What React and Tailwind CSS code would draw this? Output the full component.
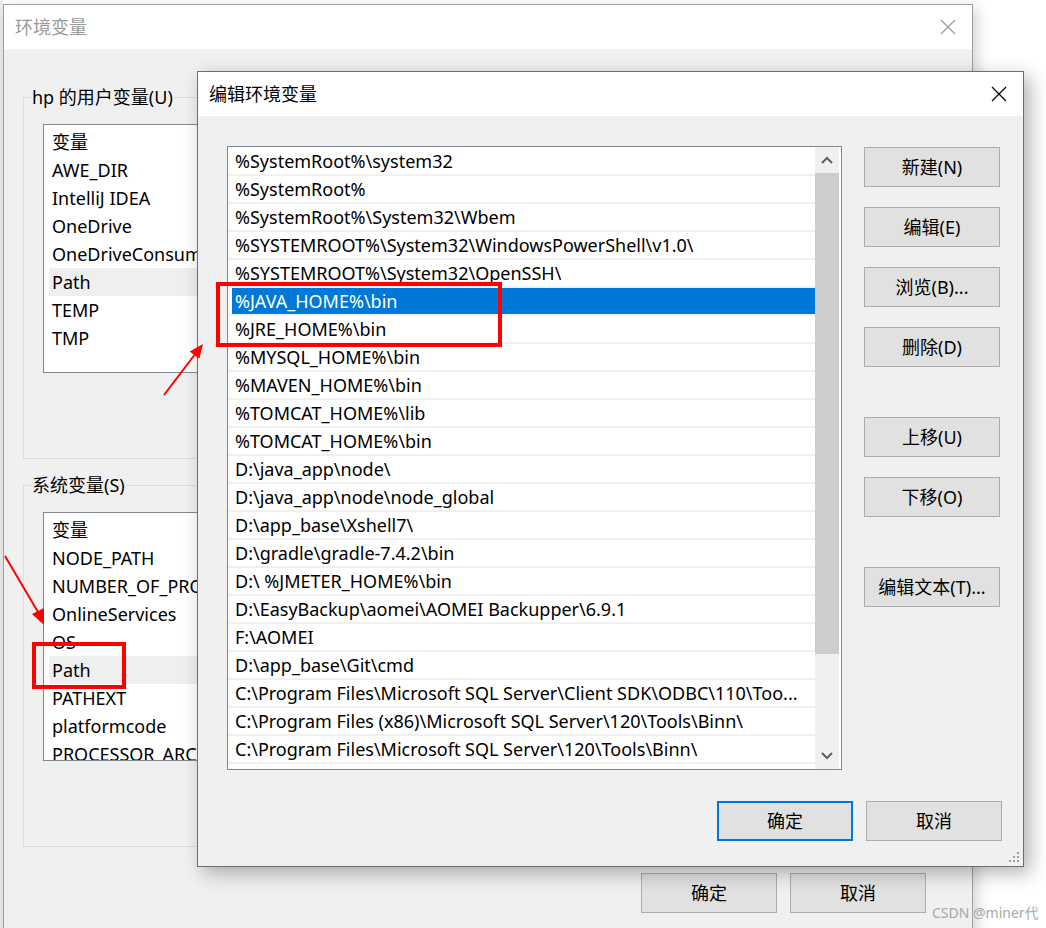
import React from 'react';

const FONT = { fontFamily: '"Noto Sans", "Noto Sans CJK SC", sans-serif' };

const userVars = ['AWE_DIR', 'IntelliJ IDEA', 'OneDrive', 'OneDriveConsumer', 'Path', 'TEMP', 'TMP'];
const sysVars = ['NODE_PATH', 'NUMBER_OF_PROCESSORS', 'OnlineServices', 'OS', 'Path', 'PATHEXT', 'platformcode', 'PROCESSOR_ARCHITECTURE'];

const paths = [
  '%SystemRoot%\\system32',
  '%SystemRoot%',
  '%SystemRoot%\\System32\\Wbem',
  '%SYSTEMROOT%\\System32\\WindowsPowerShell\\v1.0\\',
  '%SYSTEMROOT%\\System32\\OpenSSH\\',
  '%JAVA_HOME%\\bin',
  '%JRE_HOME%\\bin',
  '%MYSQL_HOME%\\bin',
  '%MAVEN_HOME%\\bin',
  '%TOMCAT_HOME%\\lib',
  '%TOMCAT_HOME%\\bin',
  'D:\\java_app\\node\\',
  'D:\\java_app\\node\\node_global',
  'D:\\app_base\\Xshell7\\',
  'D:\\gradle\\gradle-7.4.2\\bin',
  'D:\\ %JMETER_HOME%\\bin',
  'D:\\EasyBackup\\aomei\\AOMEI Backupper\\6.9.1',
  'F:\\AOMEI',
  'D:\\app_base\\Git\\cmd',
  'C:\\Program Files\\Microsoft SQL Server\\Client SDK\\ODBC\\110\\Too...',
  'C:\\Program Files (x86)\\Microsoft SQL Server\\120\\Tools\\Binn\\',
  'C:\\Program Files\\Microsoft SQL Server\\120\\Tools\\Binn\\',
];

const CloseIcon = ({ color }) => (
  <svg width="16" height="16" viewBox="0 0 16 16">
    <path d="M1 1 L15 15 M15 1 L1 15" stroke={color} strokeWidth="1.2" fill="none" />
  </svg>
);

const Grip = () => (
  <svg width="10" height="10" viewBox="0 0 10 10" fill="#a0a0a0">
    <rect x="8" y="0" width="2" height="2" />
    <rect x="4" y="4" width="2" height="2" />
    <rect x="8" y="4" width="2" height="2" />
    <rect x="0" y="8" width="2" height="2" />
    <rect x="4" y="8" width="2" height="2" />
    <rect x="8" y="8" width="2" height="2" />
  </svg>
);

const Button = ({ children, primary }) => (
  <button
    className={`w-[136px] h-[40px] bg-[#e1e1e1] text-[18px] text-black flex items-center justify-center ${
      primary ? 'border-2 border-[#0078d7]' : 'border border-[#adadad]'
    }`}
  >
    {children}
  </button>
);

const VarGroup = ({ label, items, className }) => (
  <div className={`relative border border-[#dcdcdc] w-[926px] h-[362px] ${className}`}>
    <span className="absolute -top-[14px] left-[7px] bg-[#f0f0f0] px-[1px] text-[18px] leading-[26px] text-black">
      {label}
    </span>
    <div className="ml-[19px] mt-[26px] w-[400px] h-[249px] bg-white border border-[#828790] pt-[3px] overflow-hidden">
      <div className="h-[28px] ml-[5px] pl-[3px] flex items-center text-[18px]">变量</div>
      {items.map((v) => (
        <div
          key={v}
          className={`h-[28px] ml-[5px] pl-[3px] flex items-center text-[18px] whitespace-nowrap ${
            v === 'Path' ? 'bg-[#efefef]' : ''
          }`}
        >
          {v}
        </div>
      ))}
    </div>
  </div>
);

export default function App() {
  return (
    <div className="relative w-[1046px] h-[928px] bg-white overflow-hidden text-black" style={FONT}>
      {/* window behind, left strip */}
      <div className="absolute left-0 top-0 w-[3px] h-full bg-[#ececec]" />

      {/* 环境变量 (inactive) */}
      <div className="absolute left-[3px] top-[4px] w-[970px] h-[950px] border border-[#a0a0a0] bg-[#f0f0f0] flex flex-col shadow-[4px_4px_14px_rgba(0,0,0,0.18)]">
        <div className="h-[44px] bg-white flex items-center justify-between pl-[11px] pr-[16px]">
          <span className="text-[18px] text-[#9a9a9a]">环境变量</span>
          <CloseIcon color="#9a9a9a" />
        </div>
        <div className="flex-1 px-[19px] flex flex-col">
          <VarGroup label="hp 的用户变量(U)" items={userVars} className="mt-[48px]" />
          <VarGroup label="系统变量(S)" items={sysVars} className="mt-[26px]" />
          <div className="mt-[26px] flex justify-end gap-[13px] pr-[27px]">
            <Button>确定</Button>
            <Button>取消</Button>
          </div>
        </div>
      </div>

      {/* 编辑环境变量 */}
      <div className="absolute left-[197px] top-[71px] w-[827px] h-[796px] border border-[#6e6e6e] bg-[#f0f0f0] flex flex-col shadow-[6px_6px_18px_rgba(0,0,0,0.3)]">
        <div className="h-[44px] bg-white flex items-center justify-between pl-[11px] pr-[16px]">
          <span className="text-[18px]">编辑环境变量</span>
          <CloseIcon color="#000" />
        </div>
        <div className="flex-1 flex flex-col pl-[29px] pt-[30px]">
          <div className="flex">
            <div className="w-[615px] h-[624px] bg-white border border-[#828790] flex pr-[2px] overflow-hidden">
              <div className="flex-1 min-w-0 pt-[1px]">
                {paths.map((p, i) => (
                  <div key={i} className="h-[28px] pl-[4px] flex border-b-2 border-[#f0f0f0]">
                    <div
                      className={`flex-1 min-w-0 pl-[3px] flex items-center text-[18px] ${
                        i === 5 ? 'bg-[#0078d7] text-white' : ''
                      }`}
                    >
                      <span className="truncate">{p}</span>
                    </div>
                  </div>
                ))}
              </div>
              <div className="w-[24px] bg-[#f0f0f0] flex flex-col">
                <div className="h-[26px] flex items-center justify-center">
                  <svg width="12" height="8" viewBox="0 0 12 8">
                    <path d="M1 7 L6 2 L11 7" stroke="#606060" strokeWidth="2" fill="none" />
                  </svg>
                </div>
                <div className="h-[481px] bg-[#cdcdcd]" />
                <div className="flex-1" />
                <div className="h-[26px] flex items-center justify-center">
                  <svg width="12" height="8" viewBox="0 0 12 8">
                    <path d="M1 1 L6 6 L11 1" stroke="#606060" strokeWidth="2" fill="none" />
                  </svg>
                </div>
              </div>
            </div>
            <div className="ml-[22px] pt-[1px] flex flex-col">
              <Button>新建(N)</Button>
              <div className="mt-[20px]"><Button>编辑(E)</Button></div>
              <div className="mt-[20px]"><Button>浏览(B)...</Button></div>
              <div className="mt-[20px]"><Button>删除(D)</Button></div>
              <div className="mt-[50px]"><Button>上移(U)</Button></div>
              <div className="mt-[20px]"><Button>下移(O)</Button></div>
              <div className="mt-[50px]"><Button>编辑文本(T)...</Button></div>
            </div>
          </div>
          <div className="mt-[31px] flex justify-end gap-[13px] pr-[21px]">
            <Button primary>确定</Button>
            <Button>取消</Button>
          </div>
        </div>
        <div className="absolute right-[4px] bottom-[4px]">
          <Grip />
        </div>
      </div>

      {/* annotations */}
      <div className="absolute left-[216px] top-[282px] w-[286px] h-[65px] border-4 border-[#ff0000]" />
      <div className="absolute left-[32px] top-[642px] w-[94px] h-[47px] border-4 border-[#ff0000]" />
      <svg className="absolute left-0 top-0 pointer-events-none" width="1046" height="928">
        <line x1="164" y1="395" x2="196" y2="353" stroke="#ff0000" strokeWidth="2" />
        <polygon points="203,344 199.3,358.7 189.7,351.5" fill="#ff0000" />
        <line x1="5" y1="556" x2="38" y2="612" stroke="#ff0000" strokeWidth="2" />
        <polygon points="44,625 32,614 44,608" fill="#ff0000" />
      </svg>

      <div className="absolute left-[932px] top-[902px] text-[14px] text-[#a8a8a8]">CSDN @miner代</div>
    </div>
  );
}
